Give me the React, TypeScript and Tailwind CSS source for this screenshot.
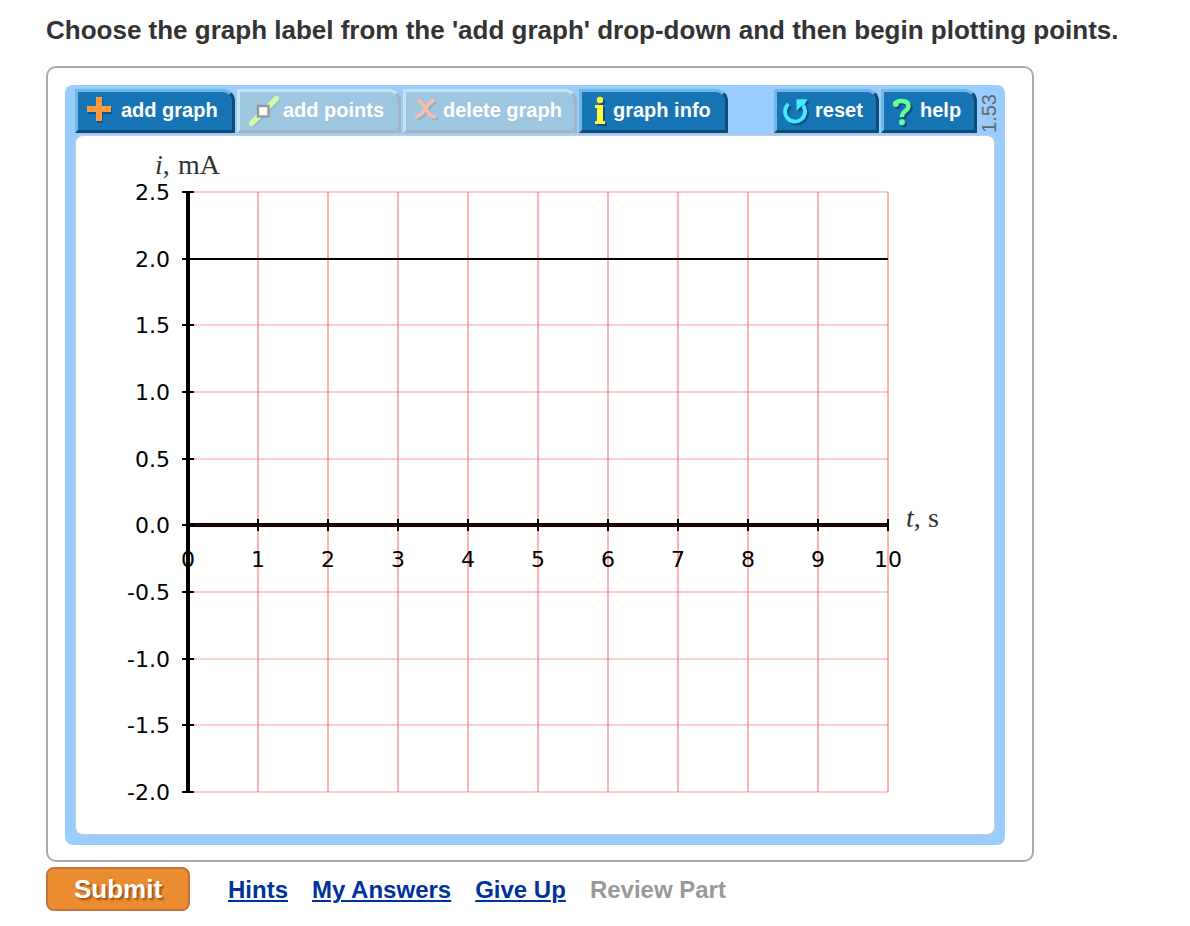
import React from 'react';

interface ToolButtonProps {
  label: string;
  icon: React.ReactNode;
  width: string;
  disabled?: boolean;
}

const ToolButton: React.FC<ToolButtonProps> = ({ label, icon, width, disabled = false }) => (
  <button
    type="button"
    disabled={disabled}
    className={`flex h-11 shrink-0 items-center gap-[3px] whitespace-nowrap rounded-tr-xl border-[3px] pb-[2px] pl-2 text-xl font-bold text-white ${width} ${
      disabled
        ? 'border-t-[#c3e2f2] border-r-[#a2b3c3] border-b-[#a2b3c3] border-l-[#c3e2f2] bg-[#9dc6e0]'
        : 'border-t-[#6fb9e3] border-r-[#104a75] border-b-[#104a75] border-l-[#6fb9e3] bg-[#1775b5]'
    }`}
  >
    {icon}
    {label}
  </button>
);

const PlusIcon = () => (
  <svg width="32" height="32" viewBox="0 1 32 32" className="shrink-0 overflow-visible" aria-hidden="true">
    <path d="M11 6h6v9h9v6h-9v9h-6v-9H2v-6h9z" fill="#0e4f7c" opacity=".8" />
    <path d="M10 4h6v9h9v6h-9v9h-6v-9H1v-6h9z" fill="#ff9940" />
  </svg>
);

const PointsIcon = () => (
  <svg width="32" height="32" viewBox="0 1 32 32" className="shrink-0 overflow-visible" aria-hidden="true">
    <path d="M5 32 29.500 7" stroke="#8aabbd" strokeWidth="5" strokeLinecap="round" opacity=".5" />
    <path d="M3.500 30.500 28.500 5.500" stroke="#cffaa8" strokeWidth="5.500" strokeLinecap="round" />
    <rect x="10" y="13" width="10.500" height="10.500" fill="#fff" stroke="#999" strokeWidth="2.400" />
  </svg>
);

const CrossShape = () => (
  <>
    <path d="M3.500 7C8 8.500 10 14 13 18C16 22.500 18.500 24.500 22 23.500" />
    <path d="M20.500 7C15 8.500 13 14 10 18C7 22 5 24 1 24" />
  </>
);

const DeleteIcon = () => (
  <svg width="26" height="32" viewBox="0 1 26 32" className="shrink-0 overflow-visible" aria-hidden="true">
    <g fill="none" stroke="#86a9bd" strokeWidth="3.600" opacity=".6" transform="translate(2 2)">
      <CrossShape />
    </g>
    <g fill="none" stroke="#ffbba8" strokeWidth="3.600">
      <CrossShape />
    </g>
  </svg>
);

const InfoShape = () => (
  <>
    <circle cx="10" cy="7" r="3.200" />
    <path d="M5 12h8v16h2v3H5v-3h2V15H5z" />
  </>
);

const InfoIcon = () => (
  <svg width="20" height="32" viewBox="0 1 20 32" className="shrink-0 overflow-visible" aria-hidden="true">
    <g fill="#0e4f7c" transform="translate(2 2)">
      <InfoShape />
    </g>
    <g fill="#ffff40">
      <InfoShape />
    </g>
  </svg>
);

const ResetShape = () => (
  <>
    <path d="M3.500 11A10 10 0 1 0 18 12.500" fill="none" strokeWidth="3.800" />
    <path d="M11.500 6.300H22.500L19.500 11.500L16.500 13L11.500 17.500z" stroke="none" />
  </>
);

const ResetIcon = () => (
  <svg width="27" height="32" viewBox="0 1 27 32" className="shrink-0 overflow-visible" aria-hidden="true">
    <g fill="#0e4f7c" stroke="#0e4f7c" transform="translate(2 2)">
      <ResetShape />
    </g>
    <g fill="#40ecff" stroke="#40ecff">
      <ResetShape />
    </g>
  </svg>
);

const HelpShape = () => (
  <>
    <path d="M3 11C4 8 7 8 9.500 8C14 8 16.500 9.500 16.500 13C16.500 18.500 10 17 10 24" fill="none" strokeWidth="4.400" />
    <circle cx="3.800" cy="11" r="3" stroke="none" />
    <circle cx="10" cy="29.200" r="3" stroke="none" />
  </>
);

const HelpIcon = () => (
  <svg width="25" height="32" viewBox="0 1 25 32" className="shrink-0 overflow-visible" aria-hidden="true">
    <g fill="#0e4f7c" stroke="#0e4f7c" transform="translate(2 2)">
      <HelpShape />
    </g>
    <g fill="#66ff99" stroke="#66ff99">
      <HelpShape />
    </g>
  </svg>
);

// Plot area geometry, in the units of the chart's viewBox
const LEFT = 112;
const RIGHT = 812;
const TOP = 56;
const BOTTOM = 656;
const ZERO_Y = 389;

const xTicks = [0, 1, 2, 3, 4, 5, 6, 7, 8, 9, 10];
const yTicks = [2.5, 2, 1.5, 1, 0.5, 0, -0.5, -1, -1.5, -2];

const xPos = (value: number) => LEFT + value * 70;
const yPos = (value: number) => Math.round(TOP + ((2.5 - value) * (BOTTOM - TOP)) / 4.5);

const Chart = () => (
  <svg
    viewBox="0 0 918 698"
    className="block h-auto w-full"
    role="img"
    aria-label="Current against time"
  >
    {yTicks.map((y) => (
      <line key={y} x1={LEFT} x2={RIGHT} y1={yPos(y)} y2={yPos(y)} stroke="#ffcccc" strokeWidth="2" />
    ))}
    {xTicks.map((x) => (
      <line key={x} x1={xPos(x)} x2={xPos(x)} y1={TOP} y2={BOTTOM} stroke="#ff6666" strokeOpacity=".5" strokeWidth="2" />
    ))}

    {/* Axes */}
    <line x1={LEFT} x2={LEFT} y1={TOP} y2={BOTTOM} stroke="#000" strokeWidth="4" />
    <line x1={LEFT} x2={RIGHT} y1={ZERO_Y} y2={ZERO_Y} stroke="#000" strokeWidth="4" />
    <line x1={LEFT + 6} x2={RIGHT} y1={ZERO_Y} y2={ZERO_Y} stroke="#330000" strokeWidth="2" />
    {yTicks.map((y) => (
      <line key={y} x1={LEFT - 6} x2={LEFT + 6} y1={yPos(y)} y2={yPos(y)} stroke="#000" strokeWidth="2" />
    ))}
    {xTicks.map((x) => (
      <line key={x} x1={xPos(x)} x2={xPos(x)} y1={ZERO_Y - 6} y2={ZERO_Y + 6} stroke="#000" strokeWidth="2" />
    ))}

    {/* Plotted value */}
    <line x1={LEFT} x2={RIGHT} y1={yPos(2)} y2={yPos(2)} stroke="#000" strokeWidth="2" />

    <g fontSize="22" fill="#000" className="font-['DejaVu_Sans',sans-serif]">
      {yTicks.map((y) => (
        <text key={y} x="94" y={yPos(y) + 8} textAnchor="end">
          {y.toFixed(1)}
        </text>
      ))}
      {xTicks.map((x) => (
        <text key={x} x={xPos(x)} y="431" textAnchor="middle">
          {x}
        </text>
      ))}
    </g>

    <g fontSize="28" fill="#333" className="font-['Liberation_Serif',serif]">
      <text x="79" y="38">
        <tspan fontStyle="italic">i</tspan>
        <tspan>, </tspan>
        <tspan x="102">mA</tspan>
      </text>
      <text x="830" y="391">
        <tspan fontStyle="italic">t</tspan>
        <tspan>, </tspan>
        <tspan x="852">s</tspan>
      </text>
    </g>
  </svg>
);

const links = ['Hints', 'My Answers', 'Give Up'];

const App: React.FC = () => {
  return (
    <div className="min-h-screen bg-white px-[46px] pt-3 font-['Liberation_Sans',Arial,sans-serif]">
      <h1 className="text-[26px] leading-9 font-bold text-[#333]">
        Choose the graph label from the 'add graph' drop-down and then begin plotting points.
      </h1>

      <main className="mt-[18px] max-w-[988px] rounded-[10px] border-2 border-[#aaa] px-[17px] pt-[17px] pb-[15px]">
        <div className="mr-[10px] rounded-lg bg-[#99ccff] pt-1 pb-[10px]">
          {/* Toolbar */}
          <div className="flex items-center gap-[2px] pr-[6px] pl-[10px]">
            <ToolButton label="add graph" icon={<PlusIcon />} width="w-[160px]" />
            <ToolButton label="add points" icon={<PointsIcon />} width="w-[164px]" disabled />
            <ToolButton label="delete graph" icon={<DeleteIcon />} width="w-[174px]" disabled />
            <ToolButton label="graph info" icon={<InfoIcon />} width="w-[149px]" />
            <div className="ml-auto flex items-center gap-[2px]">
              <ToolButton label="reset" icon={<ResetIcon />} width="w-[105px]" />
              <ToolButton label="help" icon={<HelpIcon />} width="w-[96px]" />
              <span className="rotate-180 pb-1 text-xl leading-5 text-[#666] [writing-mode:vertical-rl]">1.53</span>
            </div>
          </div>

          <div className="mx-[10px] mt-[2px] rounded-lg border border-[#ccc] bg-white">
            <Chart />
          </div>
        </div>
      </main>

      <div className="mt-[5px] flex items-center gap-6 text-2xl font-bold">
        <button
          type="button"
          className="mr-[14px] h-11 w-36 rounded-lg border-2 border-[#c4713a] bg-[#ec8c30] text-[26px] leading-none text-white [text-shadow:2px_2px_2px_#9c5318]"
        >
          Submit
        </button>
        {links.map((link) => (
          <a key={link} href="#" className="pt-[2px] text-[#003399] underline decoration-2 underline-offset-2">
            {link}
          </a>
        ))}
        <span className="pt-[2px] text-[#999]">Review Part</span>
      </div>
    </div>
  );
};

export default App;
